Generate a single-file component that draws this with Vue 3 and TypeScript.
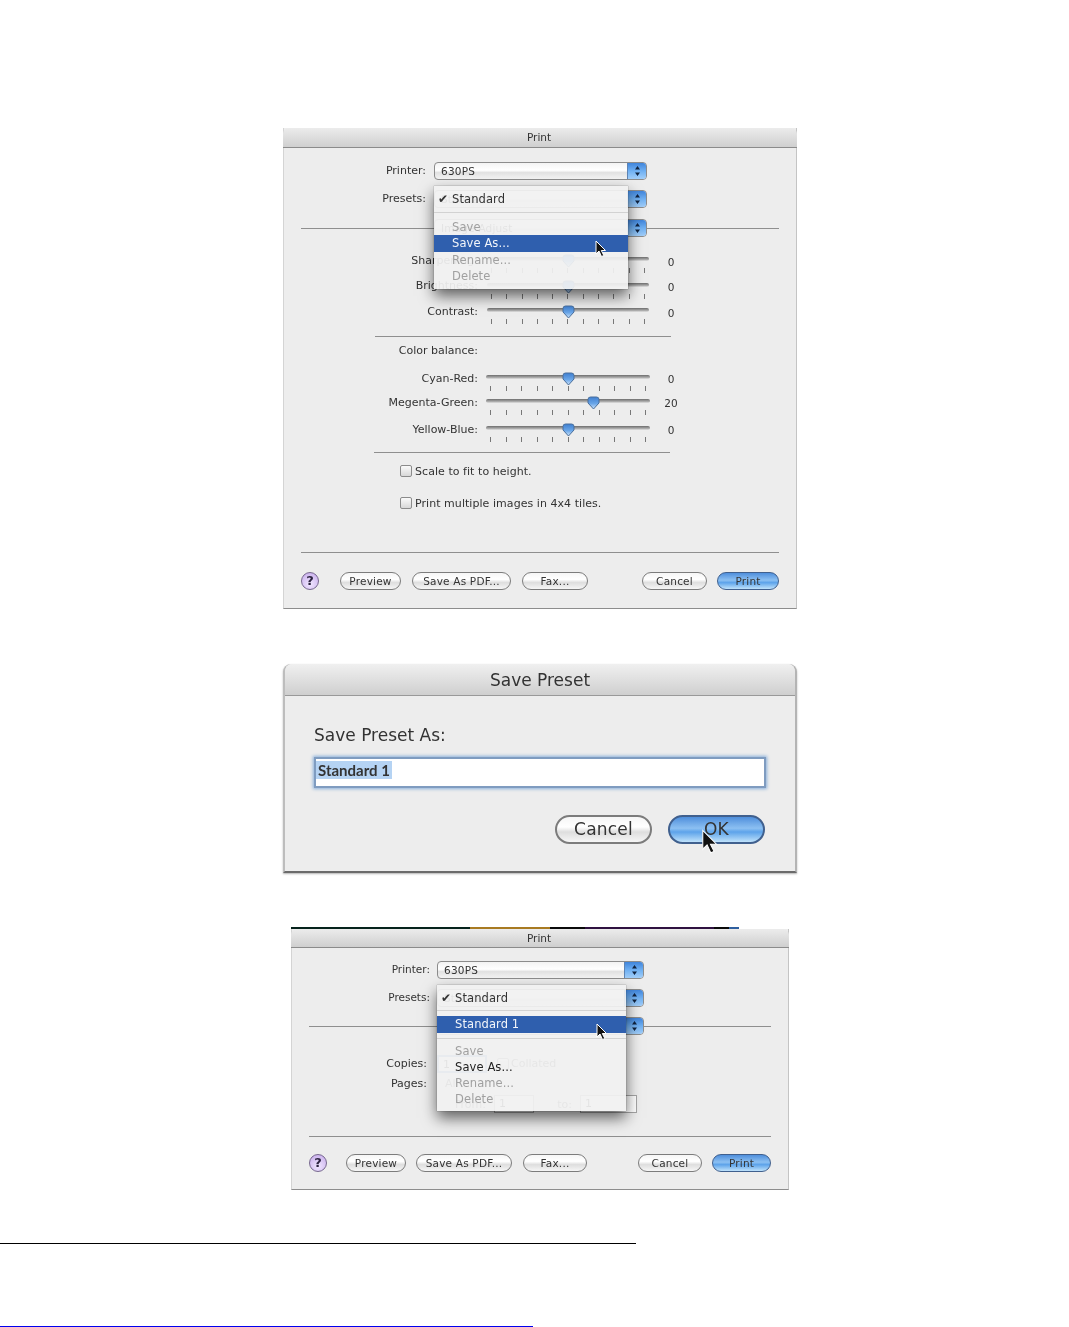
<template>
  <div class="page">
    <!-- print dialog, preset menu open -->
    <section class="win win-a">
      <header class="win-title">Print</header>
      <div class="win-body">
        <div class="popup-row">
          <label>Printer:</label>
          <div class="popup"><span>630PS</span><i class="popup-arrows"><svg width="7" height="12" viewBox="0 0 7 12"><path d="M3.5 1 6 4.5H1zM3.5 11 1 7.5h5z" /></svg></i></div>
        </div>
        <div class="popup-row">
          <label>Presets:</label>
          <div class="popup"><span>Standard</span><i class="popup-arrows"><svg width="7" height="12" viewBox="0 0 7 12"><path d="M3.5 1 6 4.5H1zM3.5 11 1 7.5h5z" /></svg></i></div>
        </div>
        <div class="popup-row divided">
          <hr />
          <div class="popup"><span>Image Adjust</span><i class="popup-arrows"><svg width="7" height="12" viewBox="0 0 7 12"><path d="M3.5 1 6 4.5H1zM3.5 11 1 7.5h5z" /></svg></i></div>
          <hr />
        </div>

        <div class="sliders first">
          <div v-for="s in toneSliders" :key="s.name" class="slider-row">
            <label>{{ s.name }}:</label>
            <div class="slider">
              <div class="track"></div>
              <svg class="thumb" :style="{ left: thumbLeft(s.value) }" width="13" height="14" viewBox="0 0 13 14"><path d="M1 3.5Q1 1 3.5 1h6Q12 1 12 3.5V7L6.5 13 1 7z" fill="url(#thumbFill)" stroke="#4a6f9c" /></svg>
              <div class="ticks"><b v-for="n in 11" :key="n"></b></div>
            </div>
            <span class="slider-val">{{ s.value }}</span>
          </div>
        </div>
        <hr class="inner-sep sep-a" />
        <div class="balance-title"><label>Color balance:</label></div>
        <div class="sliders balance">
          <div v-for="s in colorSliders" :key="s.name" class="slider-row">
            <label>{{ s.name }}:</label>
            <div class="slider wide">
              <div class="track"></div>
              <svg class="thumb" :style="{ left: thumbLeft(s.value) }" width="13" height="14" viewBox="0 0 13 14"><path d="M1 3.5Q1 1 3.5 1h6Q12 1 12 3.5V7L6.5 13 1 7z" fill="url(#thumbFill)" stroke="#4a6f9c" /></svg>
              <div class="ticks"><b v-for="n in 11" :key="n"></b></div>
            </div>
            <span class="slider-val">{{ s.value }}</span>
          </div>
        </div>
        <hr class="inner-sep sep-b" />
        <div class="check-row first-check"><i class="check"></i>Scale to fit to height.</div>
        <div class="check-row"><i class="check"></i>Print multiple images in 4x4 tiles.</div>
        <hr class="full-sep" />
        <div class="btn-row">
          <span class="help">?</span>
          <button v-for="b in leftButtons" :key="b.label" :class="['aqua', b.cls]">{{ b.label }}</button>
          <button class="aqua b-cancel push">Cancel</button>
          <button class="aqua primary b-print">Print</button>
        </div>
      </div>

      <div class="menu">
        <div class="menu-item head"><em>✔</em>Standard</div>
        <div class="menu-sep"></div>
        <div class="menu-item off">Save</div>
        <div class="menu-item active">Save As...</div>
        <div class="menu-item off">Rename...</div>
        <div class="menu-item off">Delete</div>
        <svg class="cursor" width="12" height="18" viewBox="0 0 12 18"><path d="M1 1v13l3-3 2.500 5.500 2.300-1L6.300 10.500H10.500z" fill="#111" stroke="#fff" /></svg>
      </div>
    </section>

    <!-- save preset sheet -->
    <section class="win sheet">
      <header class="sheet-title">Save Preset</header>
      <div class="sheet-body">
        <div class="sheet-label">Save Preset As:</div>
        <div class="sheet-input"><span>Standard 1</span></div>
        <div class="sheet-btns">
          <button class="aqua big">Cancel</button>
          <button class="aqua big primary">OK</button>
        </div>
      </div>
      <svg class="cursor big-cursor" width="18" height="26" viewBox="0 0 12 18"><path d="M1 1v13l3-3 2.500 5.500 2.300-1L6.300 10.500H10.500z" fill="#111" stroke="#fff" stroke-width=".7" /></svg>
    </section>

    <!-- print dialog after saving -->
    <div class="desktop-strip"></div>
    <section class="win win-c">
      <header class="win-title">Print</header>
      <div class="win-body">
        <div class="popup-row">
          <label>Printer:</label>
          <div class="popup"><span>630PS</span><i class="popup-arrows"><svg width="7" height="12" viewBox="0 0 7 12"><path d="M3.5 1 6 4.5H1zM3.5 11 1 7.5h5z" /></svg></i></div>
        </div>
        <div class="popup-row">
          <label>Presets:</label>
          <div class="popup"><span>Standard</span><i class="popup-arrows"><svg width="7" height="12" viewBox="0 0 7 12"><path d="M3.5 1 6 4.5H1zM3.5 11 1 7.5h5z" /></svg></i></div>
        </div>
        <div class="popup-row divided">
          <hr />
          <div class="popup"><span class="centered">Copies &amp; Pages</span><i class="popup-arrows"><svg width="7" height="12" viewBox="0 0 7 12"><path d="M3.5 1 6 4.5H1zM3.5 11 1 7.5h5z" /></svg></i></div>
          <hr />
        </div>
        <div class="copies-row">
          <label>Copies:</label>
          <div class="mini-field blue">1</div>
          <i class="check ghost-check"></i><span class="ghost collated">Collated</span>
        </div>
        <div class="copies-row pages">
          <label>Pages:</label>
          <span class="ghost">All</span>
        </div>
        <div class="copies-row range">
          <label></label>
          <span class="ghost from">From:</span>
          <div class="mini-field">1</div>
          <span class="ghost to">to:</span>
          <div class="mini-field end">1</div>
        </div>
        <hr class="full-sep" />
        <div class="btn-row">
          <span class="help">?</span>
          <button v-for="b in leftButtons" :key="b.label" :class="['aqua', b.cls]">{{ b.label }}</button>
          <button class="aqua b-cancel push">Cancel</button>
          <button class="aqua primary b-print">Print</button>
        </div>
      </div>

      <div class="menu">
        <div class="menu-item head"><em>✔</em>Standard</div>
        <div class="menu-sep"></div>
        <div class="menu-item active">Standard 1</div>
        <div class="menu-sep second"></div>
        <div class="menu-item off">Save</div>
        <div class="menu-item">Save As...</div>
        <div class="menu-item off">Rename...</div>
        <div class="menu-item off">Delete</div>
        <svg class="cursor" width="12" height="18" viewBox="0 0 12 18"><path d="M1 1v13l3-3 2.500 5.500 2.300-1L6.300 10.500H10.500z" fill="#111" stroke="#fff" /></svg>
      </div>
    </section>

    <div class="rule-black"></div>
    <div class="rule-blue"></div>

    <svg width="0" height="0" class="defs">
      <defs>
        <linearGradient id="thumbFill" x1="0" y1="0" x2="0" y2="1">
          <stop offset="0" stop-color="#3f7fd0" />
          <stop offset=".55" stop-color="#6aa6e8" />
          <stop offset="1" stop-color="#cfe4fa" />
        </linearGradient>
      </defs>
    </svg>
  </div>
</template>

<script setup lang="ts">
interface SliderDef {
  name: string
  value: number
}

const toneSliders: SliderDef[] = [
  { name: 'Sharpening', value: 0 },
  { name: 'Brightness', value: 0 },
  { name: 'Contrast', value: 0 },
]

const colorSliders: SliderDef[] = [
  { name: 'Cyan-Red', value: 0 },
  { name: 'Megenta-Green', value: 20 },
  { name: 'Yellow-Blue', value: 0 },
]

const leftButtons = [
  { label: 'Preview', cls: 'b-preview' },
  { label: 'Save As PDF...', cls: 'b-pdf' },
  { label: 'Fax...', cls: 'b-fax' },
]

// 0 sits mid track, 20 is about a tick and a half to the right
function thumbLeft(value: number): string {
  return `calc(${50 + value * 0.77}% - 6.5px)`
}
</script>

<style>
body { background: #fff; }
</style>

<style scoped>
.page {
  width: 1069px;
  height: 1327px;
  padding-top: 128px;
  box-sizing: border-box;
  overflow: hidden;
  background: #fff;
  font-family: "DejaVu Sans", "Liberation Sans", sans-serif;
  font-size: 11px;
  color: #333;
}
.defs { position: absolute; }

.win {
  position: relative;
  background: #ededed;
  box-sizing: border-box;
  filter: blur(0.35px);
}
.win-a { width: 514px; height: 481px; margin-left: 283px; border-bottom: 1px solid #8d8d8d; border-right: 1px solid #c4c4c4; border-left: 1px solid #d4d4d4; }
.win-c { width: 498px; height: 261px; margin-left: 291px; border-bottom: 1px solid #8d8d8d; border-right: 1px solid #c4c4c4; border-left: 1px solid #d4d4d4; }

.win-title {
  height: 20px;
  line-height: 19px;
  text-align: center;
  box-sizing: border-box;
  margin: 0 -1px;
  padding-right: 2px;
  border-radius: 6px 6px 0 0;
  border-bottom: 1px solid #8b8b8b;
  background: linear-gradient(#ececec, #cfcfcf);
  font-size: 10.5px;
}
.win-body { padding: 14px 17px 0; }
hr { border: 0; margin: 0; height: 1px; background: #8f8f8f; }

.popup-row { display: flex; align-items: center; height: 18px; margin-bottom: 10px; }
.win-a .popup-row:nth-child(2) { margin-bottom: 11px; }
.popup-row label { width: 125px; text-align: right; margin-right: 8px; padding-bottom: 2px; }
.popup {
  width: 213px;
  height: 18px;
  box-sizing: border-box;
  display: flex;
  align-items: center;
  border: 1px solid #8c8c8c;
  border-radius: 4px;
  padding-left: 6px;
  background: linear-gradient(#f3f3f3, #fff 45%, #e2e2e2 60%, #f4f4f4);
  letter-spacing: 0.2px;
  overflow: hidden;
}
.popup span { flex: 1; font-size: 10.5px; }
.popup .centered { text-align: center; }
.popup-arrows {
  width: 18px;
  height: 18px;
  flex: none;
  display: flex;
  align-items: center;
  justify-content: center;
  background: linear-gradient(#3a7fd8, #6fb0f2 50%, #a8d2fa);
  border-left: 1px solid #5e84b4;
  fill: #10233f;
}
.popup-row.divided { margin-bottom: 0; }
.popup-row.divided hr { flex: 1; }
.popup-row.divided .popup { flex: none; }
.win-a .popup-row.divided hr:first-child { flex: none; width: 133px; }

.sliders.first { margin-top: 10px; }
.slider-row { display: grid; grid-template-columns: 177px 162px 44px; column-gap: 9px; height: 25.5px; align-items: center; }
.slider-row label { text-align: right; }
.slider-val { text-align: center; margin: 3px 9px 0 -9px; font-size: 10.5px; }
.slider { position: relative; height: 26px; }
.track {
  position: absolute;
  left: 0; right: 0; top: 10px;
  height: 4px;
  border-radius: 2px;
  background: linear-gradient(#6d6d6d, #a8a8a8 60%, #e4e4e4);
}
.thumb { position: absolute; top: 7px; }
.ticks {
  position: absolute;
  left: 4px; right: 4px; top: 21px;
  display: flex;
  justify-content: space-between;
}
.ticks b { width: 1px; height: 5px; background: #777; }

.inner-sep { width: 296px; margin-left: 74px; }
.sep-a { margin-top: 12.5px; }
.balance-title { height: 27px; display: grid; grid-template-columns: 177px; align-items: center; }
.balance-title label { text-align: right; }
.balance .slider-row { height: 24px; }
.balance .slider-row:last-child { margin-top: 3px; }
.balance .slider { left: -1px; width: 164px; height: 24px; }
.balance .track { top: 9px; }
.balance .thumb { top: 6px; }
.balance .ticks { top: 20px; }
.balance .slider-val { margin-top: 1px; }
.balance { margin-top: 2px; }
.sep-b { margin-top: 11px; margin-left: 73px; }

.check-row { display: flex; align-items: center; height: 14px; margin: 18px 0 0 99px; letter-spacing: 0.05px; }
.first-check { margin-top: 11px; }
.check-row + .check-row { margin-top: 18px; }
.check {
  width: 12px;
  height: 12px;
  box-sizing: border-box;
  margin-right: 3px;
  border: 1px solid #8b8b8b;
  border-radius: 2px;
  background: linear-gradient(#fafafa, #d8d8d8);
}
.full-sep { margin-top: 42px; }

.btn-row { display: flex; align-items: center; height: 18px; margin-top: 19px; }
.help {
  width: 18px;
  height: 18px;
  flex: none;
  box-sizing: border-box;
  border: 1px solid #77688f;
  border-radius: 50%;
  text-align: center;
  line-height: 16px;
  font-weight: bold;
  font-size: 13px;
  margin-right: 21px;
  color: #2c2340;
  background: radial-gradient(circle at 50% 70%, #f0e6ff, #c4a8ea);
}
.aqua {
  height: 18px;
  box-sizing: border-box;
  padding: 0;
  margin: 0 11px 0 0;
  border: 1px solid #7c7c7c;
  border-radius: 9px;
  background: linear-gradient(#f6f6f6, #fff 40%, #dedede 60%, #f6f6f6);
  font: inherit;
  font-size: 10.5px;
  letter-spacing: 0.2px;
  color: #333;
}
.aqua.primary {
  border-color: #40608e;
  background: linear-gradient(#4f8fdc, #8cc0f2 45%, #5da3ea 60%, #bfe2fb);
}
.b-preview { width: 61px; }
.b-pdf { width: 99px; }
.b-fax { width: 66px; }
.b-cancel { width: 65px; margin-right: 10px; }
.b-print { width: 62px; margin-right: 0; }
.push { margin-left: auto; }

.menu {
  position: absolute;
  left: 150px;
  top: 58px;
  width: 194px;
  height: 103px;
  box-sizing: border-box;
  padding-top: 5px;
  background: rgba(241, 241, 241, 0.93);
  box-shadow: 0 7px 14px rgba(0, 0, 0, 0.6), 0 0 1px rgba(0, 0, 0, 0.5);
  font-size: 11.5px;
  letter-spacing: 0.1px;
}
.menu-item { height: 16.500px; line-height: 16.500px; padding-left: 18px; position: relative; color: #222; }
.menu-item.head { color: #333; }
.menu-item em { position: absolute; left: 4px; font-style: normal; font-size: 12px; }
.menu-item.off { color: #a0a0a0; }
.menu-item.active { background: #2f5fae; color: #f2f5fa; }
.menu-sep { height: 1px; margin: 4px 0 6px; background: #d2d2d2; }
.cursor { position: absolute; left: 161px; top: 54px; }

.sheet {
  width: 514px;
  height: 209px;
  margin: 55px 0 0 283px;
  border-style: solid;
  border-width: 0 2px 2px 2px;
  border-color: #c8c8c8 #b4b4b4 #6b6b6b #bdbdbd;
  border-radius: 8px 8px 0 0;
  box-shadow: 0 1px 2px rgba(0, 0, 0, 0.3);
  filter: blur(0.6px);
}
.sheet-title {
  height: 32px;
  line-height: 32px;
  box-sizing: border-box;
  text-align: center;
  font-size: 17px;
  border-bottom: 1px solid #999;
  border-radius: 8px 8px 0 0;
  background: linear-gradient(#f0f0f0, #cfcfcf);
}
.sheet-body { padding: 27px 29px 0; }
.sheet-label { font-size: 17px; line-height: 24px; color: #333; }
.sheet-input {
  height: 31px;
  margin-top: 10px;
  box-sizing: border-box;
  padding: 1px 0;
  background: #fff;
  border: 2px solid #7f9cc0;
  box-shadow: 0 0 3px 1px rgba(112, 160, 215, 0.8);
  font-family: Lato, "Liberation Sans", sans-serif;
  font-size: 15px;
  font-weight: bold;
  line-height: 21px;
}
.sheet-input span { background: #b5d3f3; padding: 0 2px; }
.sheet-btns { display: flex; justify-content: flex-end; gap: 16px; margin: 27px 1px 0 0; }
.aqua.big {
  width: 97px;
  height: 29px;
  margin: 0;
  padding-bottom: 2px;
  border-radius: 15px;
  font-size: 17px;
  border-width: 2px;
}
.big-cursor { left: 416px; top: 165px; }

.desktop-strip {
  width: 498px;
  height: 2px;
  margin: 54px 0 0 291px;
  background: linear-gradient(90deg, #06231c 0 36%, #a87a22 36% 52%, #0a0a0a 52% 59%, #2f1240 59% 85%, #0a0a0a 85% 88%, #2f5f9f 88% 90%, #fff 90%);
}
.win-c .win-title { height: 19px; line-height: 18px; }
.win-c .popup-row label { width: 121px; margin-right: 7px; font-size: 10.5px; }
.win-c .popup { width: 207px; }
.win-c .popup-row { margin-bottom: 10px; }
.win-c .win-body { padding-top: 13px; }
.win-c .popup-row.divided { margin-bottom: 0; }
.win-c .popup-row.divided hr:first-child { flex: none; width: 128px; }

.copies-row { display: flex; align-items: center; height: 19px; }
.copies-row label { width: 118px; text-align: right; margin-right: 10px; }
.win-c .popup-row.divided + .copies-row { margin-top: 19px; }
.pages { margin-top: 1px; }
.range { margin-top: 1px; height: 20px; }
.mini-field { width: 40px; height: 18px; box-sizing: border-box; border: 1px solid #a5a5a5; background: #fff; padding-left: 4px; line-height: 16px; margin: 0 8px; }
.mini-field.blue { margin-left: 0; width: 50px; border: 2px solid #6f9ad2; }
.mini-field.end { width: 57px; margin: 0 134px 0 8px; }
.ghost { color: #555; margin-left: 8px; }
.ghost.from { margin-left: 18px; }
.ghost.to { margin-left: auto; }
.ghost.collated { margin-left: 2px; }
.ghost-check { margin-left: 2px; margin-right: 0; }
.win-c .full-sep { margin-top: 22px; }
.win-c .btn-row { margin-top: 17px; }
.win-c .help { margin-right: 19px; }
.win-c .b-preview { width: 60px; margin-right: 10px; }
.win-c .b-pdf { width: 96px; }
.win-c .b-fax { width: 64px; }
.win-c .b-cancel { width: 64px; }
.win-c .b-print { width: 59px; }
.win-c .menu { left: 145px; top: 56px; width: 189px; height: 126px; padding-top: 5px; }
.win-c .menu-item { height: 16.300px; line-height: 16.300px; }
.win-c .menu-sep.second { margin: 5px 0 4px; }
.win-c .menu-sep { margin: 4px 0 5px; }
.win-c .cursor { left: 159px; top: 38px; }

.rule-black { width: 636px; height: 1px; margin-top: 53px; background: #000; }
.rule-blue { width: 533px; height: 1px; margin-top: 82px; background: #00e; }
</style>
